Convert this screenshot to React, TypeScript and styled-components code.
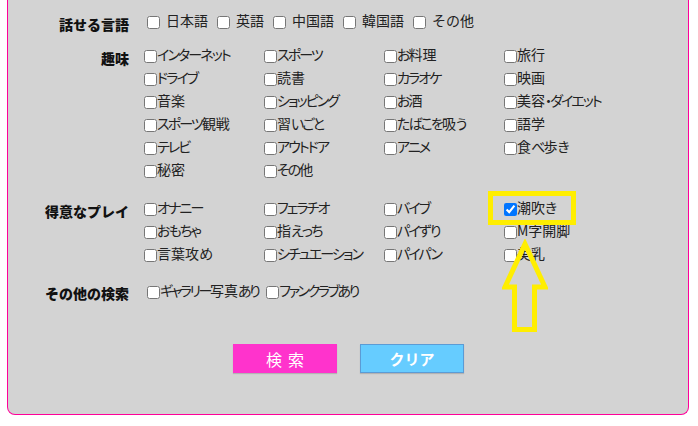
import styled, { createGlobalStyle } from 'styled-components';

const GlobalStyle = createGlobalStyle`
  html, body {
    margin: 0;
    padding: 0;
    background: #fff;
    font-family: "Noto Sans CJK JP", "Noto Sans", sans-serif;
    font-feature-settings: "palt";
    color: #222;
  }
`;

const Panel = styled.div`
  position: relative;
  box-sizing: border-box;
  width: 682px;
  height: 415px;
  margin-left: 7px;
  padding-top: 10px;
  background: #d3d3d3;
  border: 1px solid #ff0099;
  border-top: none;
  border-radius: 0 0 8px 8px;
`;

const Section = styled.div<{ $gap: number }>`
  display: grid;
  grid-template-columns: 121px 1fr;
  margin-bottom: ${(p) => p.$gap}px;
`;

const Label = styled.div<{ $top: number }>`
  padding-top: ${(p) => p.$top}px;
  text-align: right;
  font-size: 14px;
  line-height: 20px;
  font-weight: 900;
  font-feature-settings: normal;
  color: #111;
`;

const LanguageList = styled.div`
  display: flex;
  padding-left: 18px;
  height: 20px;
`;

const LanguageOption = styled.label`
  display: flex;
  align-items: center;
  margin-right: 9px;
  font-size: 14px;
  line-height: 20px;
  font-feature-settings: normal;

  & input {
    margin: 5px 6px 0 0;
  }
`;

const CheckGrid = styled.div`
  display: grid;
  grid-template-columns: repeat(4, 120px);
  grid-auto-rows: 23px;
  padding-left: 15px;
`;

const CheckOption = styled.label`
  display: flex;
  align-items: center;
  font-size: 14px;
  line-height: 23px;
  white-space: nowrap;

  & input {
    flex: none;
    margin: 4px 0 0 0;
  }
`;

const Kana = styled.span`
  letter-spacing: -1.9px;
`;

const ExtraList = styled.div`
  display: flex;
  gap: 8px;
  padding-left: 18px;
  height: 23px;

  & ${Kana} {
    letter-spacing: -2.4px;
  }
`;

const ButtonRow = styled.div`
  display: flex;
  gap: 23px;
  margin-top: 41px;
  padding-left: 225px;
`;

const ActionButton = styled.button<{ $bg: string; $edge: string; $spaced?: boolean }>`
  width: 104px;
  height: 29px;
  padding: 0 0 0 ${(p) => (p.$spaced ? '6px' : '0')};
  background: ${(p) => p.$bg};
  border: 1px solid ${(p) => p.$edge};
  color: #fff;
  font-family: inherit;
  font-size: ${(p) => (p.$spaced ? '16px' : '15px')};
  font-weight: ${(p) => (p.$spaced ? 400 : 700)};
  letter-spacing: ${(p) => (p.$spaced ? '6px' : '0')};
  box-shadow: 0 1px 1px rgba(0, 0, 0, 0.15);
`;

const Highlight = styled.div`
  position: absolute;
  left: 480px;
  top: 191px;
  box-sizing: border-box;
  width: 88px;
  height: 34px;
  border: 5px solid #ffee00;
`;

const Arrow = styled.svg`
  position: absolute;
  left: 494px;
  top: 239px;
`;

const hobbies = [
  'インターネット', 'スポーツ', 'お料理', '旅行',
  'ドライブ', '読書', 'カラオケ', '映画',
  '音楽', 'ショッピング', 'お酒', '美容・ダイエット',
  'スポーツ観戦', '習いごと', 'たばこを吸う', '語学',
  'テレビ', 'アウトドア', 'アニメ', '食べ歩き',
  '秘密', 'その他',
];

const plays = [
  'オナニー', 'フェラチオ', 'バイブ', '潮吹き',
  'おもちゃ', '指えっち', 'パイずり', 'M字開脚',
  '言葉攻め', 'シチュエーション', 'パイパン', '美乳',
];

const languages = ['日本語', '英語', '中国語', '韓国語', 'その他'];

// kana sit tighter than kanji in the original font
function Tight({ text }: { text: string }) {
  const runs = text.split(/([\u3040-\u30ff]+)/).filter(Boolean);
  return (
    <span>
      {runs.map((run, i) =>
        /[\u3040-\u30ff]/.test(run) ? <Kana key={i}>{run}</Kana> : <span key={i}>{run}</span>
      )}
    </span>
  );
}

export default function App() {
  return (
    <>
      <GlobalStyle />
      <Panel>
        <Section $gap={9}>
          <Label $top={4}>話せる言語</Label>
          <LanguageList>
            {languages.map((l) => (
              <LanguageOption key={l}>
                <input type="checkbox" />
                {l}
              </LanguageOption>
            ))}
          </LanguageList>
        </Section>
        <Section $gap={15}>
          <Label $top={5}>趣味</Label>
          <CheckGrid>
            {hobbies.map((h) => (
              <CheckOption key={h}>
                <input type="checkbox" />
                <Tight text={h} />
              </CheckOption>
            ))}
          </CheckGrid>
        </Section>
        <Section $gap={14}>
          <Label $top={5}>得意なプレイ</Label>
          <CheckGrid>
            {plays.map((p) => (
              <CheckOption key={p}>
                <input type="checkbox" defaultChecked={p === '潮吹き'} />
                <Tight text={p} />
              </CheckOption>
            ))}
          </CheckGrid>
        </Section>
        <Section $gap={0}>
          <Label $top={4}>その他の検索</Label>
          <ExtraList>
            <CheckOption>
              <input type="checkbox" />
              <Tight text="ギャラリー写真あり" />
            </CheckOption>
            <CheckOption>
              <input type="checkbox" />
              <Tight text="ファンクラブあり" />
            </CheckOption>
          </ExtraList>
        </Section>
        <ButtonRow>
          <ActionButton $bg="#ff33cc" $edge="#ff33cc" $spaced>検索</ActionButton>
          <ActionButton $bg="#66ccff" $edge="#5b9bd5">クリア</ActionButton>
        </ButtonRow>
        <Highlight />
        <Arrow width="46" height="94" viewBox="0 0 46 94">
          <path d="M23 5 L43 48 H32.5 V90.5 H12.5 V48 H3 Z" fill="none" stroke="#ffee00" strokeWidth="5" />
        </Arrow>
      </Panel>
    </>
  );
}
